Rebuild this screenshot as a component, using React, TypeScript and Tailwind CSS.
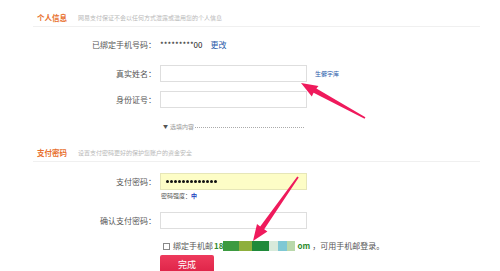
const font = { fontFamily: '"Noto Sans CJK SC", "Liberation Sans", sans-serif' }

function SectionHeader({ title, hint, className }: { title: string; hint: string; className: string }) {
	return (
		<div className={`ml-[33px] mr-[20px] flex items-center border-b border-[#f0f0f0] pl-[4px] ${className}`}>
			<span className="text-[7.5px] font-bold text-[#e8702e]">{title}</span>
			<span className="ml-[11px] text-[6px] text-[#b8b8b8]">{hint}</span>
		</div>
	)
}

function Row({ label, className, children }: { label?: string; className: string; children?: React.ReactNode }) {
	return (
		<div className={`flex items-center ${className}`}>
			<div className="w-[156px] shrink-0 text-right text-[8px] text-[#555]">{label}</div>
			<div className="ml-[4px] flex h-full items-center">{children}</div>
		</div>
	)
}

function PwDots() {
	return (
		<div className="flex gap-[1px] pl-[5px]">
			{Array.from({ length: 13 }).map((_, i) => (
				<div key={i} className="h-[3px] w-[3px] rounded-full bg-[#111]" />
			))}
		</div>
	)
}

export default function App() {
	return (
		<div className="relative h-[271px] w-[500px] overflow-hidden bg-white" style={font}>
			<SectionHeader
				className="mt-[9px] h-[18px]"
				title="个人信息"
				hint="网易支付保证不会以任何方式泄露或滥用您的个人信息"
			/>
			<Row label="已绑定手机号码：" className="mt-[10px] h-[16px]">
				<span className="text-[8px] text-[#222]">*********00</span>
				<span className="ml-[8px] text-[8px] text-[#2a5caa]">更改</span>
			</Row>
			<Row label="真实姓名：" className="mt-[12px] h-[17px]">
				<div className="h-[17px] w-[147px] border border-[#dedede] bg-white" />
				<span className="ml-[8px] text-[6px] text-[#2a5caa]">生僻字库</span>
			</Row>
			<Row label="身份证号：" className="mt-[9px] h-[17px]">
				<div className="h-[17px] w-[147px] border border-[#dedede] bg-white" />
			</Row>
			<Row className="mt-[12px] h-[12px]">
				<div className="flex w-[144px] items-center pl-[3px]">
					<span className="text-[5px] text-[#555]">▼</span>
					<span className="ml-[2px] text-[6px] text-[#999]">选填内容</span>
					<div className="ml-[1px] mt-[2px] flex-1 border-t border-dotted border-[#aaa]" />
				</div>
			</Row>
			<SectionHeader
				className="mt-[12px] h-[18px]"
				title="支付密码"
				hint="设置支付密码更好的保护您账户的资金安全"
			/>
			<Row label="支付密码：" className="mt-[11px] h-[17px]">
				<div className="flex h-[17px] w-[147px] items-center border border-[#e6e6b8] bg-[#fdfdc6]">
					<PwDots />
				</div>
			</Row>
			<Row className="h-[11px]">
				<span className="pl-[1px] text-[6px] text-[#555]">
					密码强度：<span className="font-bold text-[#1a3fc0]">中</span>
				</span>
			</Row>
			<Row label="确认支付密码：" className="mt-[11px] h-[17px]">
				<div className="h-[17px] w-[147px] border border-[#dedede] bg-white" />
			</Row>
			<Row className="mt-[11px] h-[12px]">
				<div className="ml-[3px] h-[7px] w-[7px] border border-[#888] bg-white" />
				<span className="ml-[3px] text-[8px] text-[#555]">绑定手机邮</span>
				<span className="ml-[1px] text-[8px] font-bold text-[#2e8b2e]">18</span>
				<div className="flex h-[10px]">
					<div className="w-[16px] bg-[#3c9a40]" />
					<div className="w-[13px] bg-[#8eaf3c]" />
					<div className="w-[17px] bg-[#1f8a3a]" />
					<div className="w-[9px] bg-[#d8eadb]" />
					<div className="w-[9px] bg-[#7fc8d4]" />
					<div className="w-[8px] bg-[#b9d8ab]" />
				</div>
				<span className="ml-[2px] text-[8px] font-bold text-[#2e8b2e]">om</span>
				<span className="ml-[2px] text-[8px] text-[#555]">，可用手机邮登录。</span>
			</Row>
			<Row className="mt-[3px] h-[20px]">
				<div className="flex h-[20px] w-[54px] items-center justify-center rounded-t-[2px] bg-gradient-to-b from-[#ee3a5c] to-[#dc1f45] text-[9px] text-white">
					完成
				</div>
			</Row>
			<svg className="pointer-events-none absolute left-0 top-0" width="500" height="271">
				<polygon
					fill="#ef1a5c"
					points="301,83 318.5,86 316.4,88.6 365.4,117.3 364.6,118.7 313.6,92.8 311.8,96.4"
				/>
				<polygon
					fill="#ef1a5c"
					points="253,241 267.4,231.6 264.2,229.3 298.7,177.5 297.3,176.5 260.2,226.5 257,224"
				/>
			</svg>
		</div>
	)
}
